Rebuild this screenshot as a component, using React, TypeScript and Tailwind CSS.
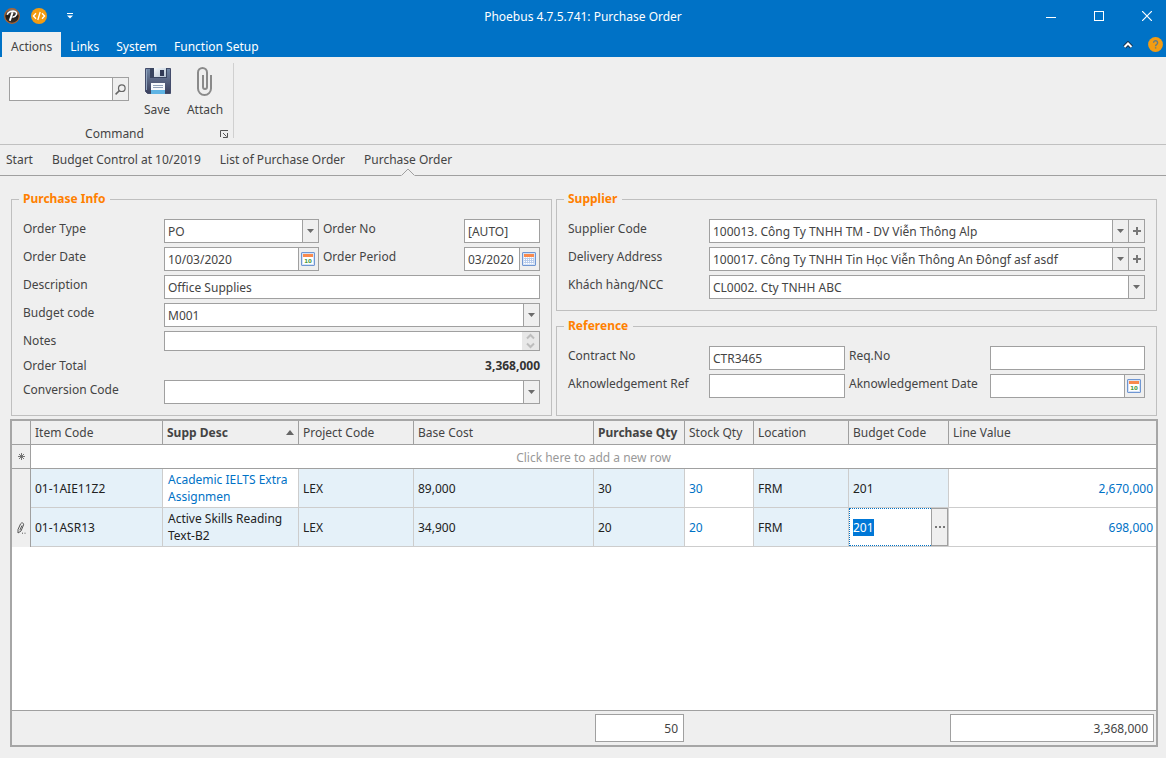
import { useEffect, useRef, ReactNode } from "react";

const menuTabs = ["Links", "System", "Function Setup"];

const openPages = ["Start", "Budget Control at 10/2019", "List of Purchase Order", "Purchase Order"];

const columns = [
  { title: "Item Code", width: "w-[132px]", bold: false },
  { title: "Supp Desc", width: "w-[136px]", bold: true },
  { title: "Project Code", width: "w-[115px]", bold: false },
  { title: "Base Cost", width: "w-[180px]", bold: false },
  { title: "Purchase Qty", width: "w-[91px]", bold: true },
  { title: "Stock Qty", width: "w-[69px]", bold: false },
  { title: "Location", width: "w-[95px]", bold: false },
  { title: "Budget Code", width: "w-[100px]", bold: false },
  { title: "Line Value", width: "", bold: false },
];

const orderLines = [
  {
    item: "01-1AIE11Z2",
    desc: "Academic IELTS Extra Assignmen",
    project: "LEX",
    cost: "89,000",
    qty: "30",
    stock: "30",
    location: "FRM",
    budget: "201",
    value: "2,670,000",
    editing: false,
  },
  {
    item: "01-1ASR13",
    desc: "Active Skills Reading Text-B2",
    project: "LEX",
    cost: "34,900",
    qty: "20",
    stock: "20",
    location: "FRM",
    budget: "201",
    value: "698,000",
    editing: true,
  },
];

/* ---------- Icons ---------- */

function PhoebusLogo() {
  return (
    <svg width="16" height="16" viewBox="0 0 16 16" aria-hidden="true">
      <defs>
        <linearGradient id="logoFill" x1="0" y1="0" x2="0" y2="1">
          <stop offset="0" stopColor="#8a8480" />
          <stop offset="0.5" stopColor="#1d1a18" />
          <stop offset="1" stopColor="#3a3430" />
        </linearGradient>
      </defs>
      <circle cx="8" cy="8" r="7.3" fill="url(#logoFill)" stroke="#b0622c" strokeWidth="1.2" />
      <path d="M3.200 6.800C4 3.600 8.500 2.600 11 3.400c3 1 1.800 5.200-2.600 5.800" fill="none" stroke="#fff" strokeWidth="1.600" />
      <path d="M8.600 4.200 5.800 12.800" stroke="#fff" strokeWidth="2" />
    </svg>
  );
}

function CodeIcon() {
  return (
    <svg width="16" height="16" viewBox="0 0 16 16" fill="none" stroke="#fff" aria-hidden="true">
      <circle cx="8" cy="8" r="8" fill="#f39c12" stroke="none" />
      <path d="M5 5.2 2.4 8 5 10.8M11 5.2 13.6 8 11 10.8M9.2 4 6.8 12" strokeWidth="1.3" />
    </svg>
  );
}

function FloppyIcon() {
  return (
    <svg width="28" height="28" viewBox="0 0 28 28" aria-hidden="true">
      <defs>
        <linearGradient id="floppyBody" x1="0" y1="0" x2="0" y2="1">
          <stop offset="0" stopColor="#7187a5" />
          <stop offset="0.5" stopColor="#56627f" />
          <stop offset="1" stopColor="#383e5c" />
        </linearGradient>
        <linearGradient id="floppyShutter" x1="0" y1="0" x2="1" y2="1">
          <stop offset="0" stopColor="#f4f8fb" />
          <stop offset="1" stopColor="#b5c3d2" />
        </linearGradient>
      </defs>
      <path d="M2.500 1.500h25v25h-23l-2-2z" fill="url(#floppyBody)" stroke="#444c6b" />
      <path d="M3.500 2.500V23" stroke="#93a6bf" />
      <rect x="7" y="1" width="17" height="10" fill="#394560" />
      <rect x="11" y="1" width="12" height="9" fill="url(#floppyShutter)" />
      <rect x="17" y="3" width="4" height="6" fill="#313a55" />
      <rect x="8" y="16" width="14" height="11" fill="#f6f9fc" />
      <rect x="8" y="23" width="14" height="4" fill="#5fb4e4" />
      <path d="M10 18.500h10M10 20.500h10" stroke="#8fa0b8" />
    </svg>
  );
}

function ClipIcon() {
  return (
    <svg width="28" height="32" viewBox="0 0 28 32" fill="none" stroke="#8a8a8a" strokeWidth="2" aria-hidden="true">
      <path d="M20 8v13.500a6.500 6.500 0 0 1-13 0v-16a4.500 4.500 0 0 1 9 0V20a2 2 0 0 1-4 0V8" />
    </svg>
  );
}

function CalendarIcon({ month = false }: { month?: boolean }) {
  return (
    <svg width="14" height="14" viewBox="0 0 14 14" aria-hidden="true">
      <rect x="0.500" y="0.500" width="13" height="13" rx="0.500" fill="#d6e2f5" stroke="#6f96d2" />
      <rect x="2" y="2" width="10" height="10" fill="#fff" />
      <rect x="2" y="2" width="10" height="3" fill="#f98a4d" />
      {month ? (
        <path d="M2 6.500h10M2 8.500h10M2 10.500h10M3.500 5.500v6M5.500 5.500v6M7.500 5.500v6M9.500 5.500v6M11.500 5.500v6" stroke="#b3c8ea" strokeWidth="0.9" />
      ) : (
        <text x="7" y="10.500" textAnchor="middle" fontFamily="DejaVu Sans, sans-serif" fontWeight="bold" fontSize="5.5" fill="#4a9a3c">
          10
        </text>
      )}
    </svg>
  );
}

function DownArrow() {
  return (
    <svg width="7" height="4" viewBox="0 0 7 4" aria-hidden="true">
      <path d="M0 0h7L3.500 4z" fill="#6b6b6b" />
    </svg>
  );
}

/* ---------- Form parts ---------- */

function SideButton({ label, wide = false, children }: { label: string; wide?: boolean; children: ReactNode }) {
  return (
    <button
      type="button"
      aria-label={label}
      className={`flex shrink-0 items-center justify-center border-l border-[#a0a0a0] bg-[#efefef] ${wide ? "w-5 pr-px" : "w-4"}`}
    >
      {children}
    </button>
  );
}

function FieldLabel({ id, second = false, children }: { id: string; second?: boolean; children: ReactNode }) {
  return (
    <label htmlFor={id} className={`whitespace-nowrap leading-5 ${second ? "pl-1" : ""}`}>
      {children}
    </label>
  );
}

function TextField({ id, value = "", children }: { id: string; value?: string; children?: ReactNode }) {
  return (
    <div className="flex h-6 min-w-0 border border-[#a0a0a0] bg-white">
      <input id={id} defaultValue={value} className="w-full min-w-0 flex-1 px-[3px] pt-px outline-none" />
      {children}
    </div>
  );
}

function ComboField({ id, value = "", plus = false }: { id: string; value?: string; plus?: boolean }) {
  return (
    <div className="flex h-6 min-w-0 border border-[#a0a0a0] bg-white">
      <select id={id} defaultValue={value} className="w-full min-w-0 flex-1 appearance-none px-[3px] pt-px outline-none">
        <option value={value}>{value}</option>
      </select>
      <SideButton label="Open list">
        <DownArrow />
      </SideButton>
      {plus && (
        <SideButton label="Add new">
          <svg width="8" height="8" viewBox="0 0 8 8" aria-hidden="true">
            <path d="M4 0v8M0 4h8" stroke="#777" strokeWidth="2" />
          </svg>
        </SideButton>
      )}
    </div>
  );
}

function Group({ title, className = "", children }: { title: string; className?: string; children: ReactNode }) {
  return (
    <fieldset className={`min-w-0 border border-[#bfbfbf] px-[11px] pb-[11px] ${className}`}>
      <legend className="-ml-1 pl-1 pr-[5px] text-[12px] font-bold leading-5 text-[#ff8000]">{title}</legend>
      <div className="mt-[10px]">{children}</div>
    </fieldset>
  );
}

/* ---------- Title bar and ribbon ---------- */

function TitleBar() {
  return (
    <header className="bg-[#0072c6] text-white">
      <div className="grid h-8 grid-cols-[1fr_auto_1fr] items-center">
        <div className="flex items-center pl-1">
          <PhoebusLogo />
          <button type="button" aria-label="Developer tools" className="ml-[11px]">
            <CodeIcon />
          </button>
          <button type="button" aria-label="Customize toolbar" className="ml-5">
            <svg width="6" height="6" viewBox="0 0 6 6" fill="#fff" aria-hidden="true">
              <path d="M0 0h6v1H0zM0 2.500h6L3 5.500z" />
            </svg>
          </button>
        </div>
        <h1>Phoebus 4.7.5.741: Purchase Order</h1>
        <div className="flex justify-end gap-[10px]">
          <button type="button" aria-label="Minimize" className="flex h-8 w-[38px] items-center justify-center">
            <svg width="10" height="10" viewBox="0 0 10 10" aria-hidden="true">
              <path d="M0 6.500h10" stroke="#fff" />
            </svg>
          </button>
          <button type="button" aria-label="Maximize" className="flex h-8 w-[38px] items-center justify-center">
            <svg width="10" height="10" viewBox="0 0 10 10" aria-hidden="true">
              <rect x="0.500" y="0.500" width="9" height="9" fill="none" stroke="#fff" />
            </svg>
          </button>
          <button type="button" aria-label="Close" className="flex h-8 w-[38px] items-center justify-center">
            <svg width="10" height="10" viewBox="0 0 10 10" aria-hidden="true">
              <path d="M0 0 10 10M10 0 0 10" stroke="#fff" strokeWidth="1.200" />
            </svg>
          </button>
        </div>
      </div>

      <nav className="flex h-[25px] items-stretch gap-px pl-[2px] pr-[3px]">
        <button type="button" className="bg-[#efefef] px-[9px] pt-1 text-[#444]">
          Actions
        </button>
        {menuTabs.map((tab) => (
          <button key={tab} type="button" className="px-2 pt-1">
            {tab}
          </button>
        ))}
        <button type="button" aria-label="Collapse ribbon" className="ml-auto">
          <svg width="10" height="8" viewBox="0 0 10 8" fill="none" aria-hidden="true">
            <path d="M1.500 6 5 2.500 8.500 6" stroke="#17324d" strokeWidth="4" />
            <path d="M1.500 6 5 2.500 8.500 6" stroke="#fff" strokeWidth="2" />
          </svg>
        </button>
        <button type="button" aria-label="Help" className="ml-[14px]">
          <svg width="15" height="15" viewBox="0 0 15 15" fill="none" aria-hidden="true">
            <circle cx="7.500" cy="7.500" r="7.400" fill="#f39c12" />
            <path d="M5.600 5.800a2 2 0 1 1 3.200 1.500c-.8.500-1.200.9-1.200 1.900M7.600 10.200v1.300" stroke="#5f7c88" strokeWidth="1.400" />
          </svg>
        </button>
      </nav>
    </header>
  );
}

function Ribbon() {
  return (
    <section className="flex h-[88px] border-b border-[#c0c0c0]">
      <div className="pl-[9px] pr-1 pt-[10px]">
        <div className="flex items-start">
          <div className="mr-1 mt-[10px] flex h-6 w-[120px] border border-[#a0a0a0] bg-white">
            <input aria-label="Search" className="w-full min-w-0 flex-1 px-[3px] outline-none" />
            <SideButton label="Search">
              <svg width="11" height="11" viewBox="0 0 11 11" fill="none" stroke="#666" aria-hidden="true">
                <circle cx="6.800" cy="4.200" r="3.300" strokeWidth="1.200" />
                <path d="M4.400 6.600.6 10.400" strokeWidth="1.500" />
              </svg>
            </SideButton>
          </div>
          <button type="button" className="flex w-12 flex-col items-center leading-4">
            <span className="flex h-[35px] items-start">
              <FloppyIcon />
            </span>
            Save
          </button>
          <button type="button" className="flex w-12 flex-col items-center leading-4">
            <span className="flex h-[35px] items-start">
              <ClipIcon />
            </span>
            Attach
          </button>
        </div>
        <div className="flex items-center pt-2 leading-4">
          <span className="flex-1 text-center">Command</span>
          <button type="button" aria-label="Command options">
            <svg width="9" height="9" viewBox="0 0 9 9" fill="none" stroke="#555" aria-hidden="true">
              <path d="M.5 7V.5H8M3 3l3.500 3.500M7.500 3v4.500H3" />
            </svg>
          </button>
        </div>
      </div>
      <div className="my-[6px] w-px bg-[#d0d0d0]" />
    </section>
  );
}

function PageTabs() {
  return (
    <nav className="flex h-[31px] gap-[19px] border-b border-[#a0a0a0] pl-[6px]">
      {openPages.map((page, index) => (
        <a key={page} href="#" className="relative whitespace-nowrap leading-[30px]">
          {page}
          {index === openPages.length - 1 && (
            <svg width="14" height="8" viewBox="0 0 14 8" className="absolute -bottom-px left-1/2 -translate-x-1/2" aria-hidden="true">
              <path d="M0 7.500 7 .5l7 7V8H0z" fill="#efefef" />
              <path d="M.5 7.500 7 1l6.500 6.500" fill="none" stroke="#a0a0a0" />
            </svg>
          )}
        </a>
      ))}
    </nav>
  );
}

/* ---------- Order form ---------- */

function OrderForm() {
  return (
    <div className="grid grid-cols-[541fr_601fr] gap-1 pl-[11px] pr-[9px]">
      <Group title="Purchase Info">
        <div className="grid grid-cols-[141px_155fr_145px_76fr] gap-y-1">
          <FieldLabel id="orderType">Order Type</FieldLabel>
          <ComboField id="orderType" value="PO" />
          <FieldLabel id="orderNo" second>Order No</FieldLabel>
          <TextField id="orderNo" value="[AUTO]" />

          <FieldLabel id="orderDate">Order Date</FieldLabel>
          <TextField id="orderDate" value="10/03/2020">
            <SideButton label="Pick date" wide>
              <CalendarIcon />
            </SideButton>
          </TextField>
          <FieldLabel id="orderPeriod" second>Order Period</FieldLabel>
          <TextField id="orderPeriod" value="03/2020">
            <SideButton label="Pick period" wide>
              <CalendarIcon month />
            </SideButton>
          </TextField>

          <FieldLabel id="description">Description</FieldLabel>
          <div className="col-span-3">
            <TextField id="description" value="Office Supplies" />
          </div>

          <FieldLabel id="budgetCode">Budget code</FieldLabel>
          <div className="col-span-3">
            <ComboField id="budgetCode" value="M001" />
          </div>

          <FieldLabel id="notes">Notes</FieldLabel>
          <div className="col-span-3 flex h-5 border border-[#a0a0a0] bg-white">
            <textarea id="notes" rows={1} className="min-w-0 flex-1 resize-none overflow-hidden px-[3px] outline-none" />
            <div className="flex w-[17px] items-center justify-center bg-[#e8e8e8]">
              <svg width="9" height="16" viewBox="0 0 9 16" fill="none" stroke="#bdbdbd" strokeWidth="2" aria-hidden="true">
                <path d="M1 5.500 4.500 2 8 5.500M1 10.500 4.500 14 8 10.500" />
              </svg>
            </div>
          </div>

          <label htmlFor="orderTotal" className="leading-[21px]">Order Total</label>
          <output id="orderTotal" className="col-span-3 text-right font-bold leading-[21px] text-[#333]">3,368,000</output>

          <FieldLabel id="conversion">Conversion Code</FieldLabel>
          <div className="col-span-3">
            <ComboField id="conversion" />
          </div>
        </div>
      </Group>

      <div className="flex min-w-0 flex-col gap-[5px]">
        <Group title="Supplier">
          <div className="grid grid-cols-[141px_1fr] gap-y-1">
            <FieldLabel id="supplier">Supplier Code</FieldLabel>
            <ComboField id="supplier" value="100013. Công Ty TNHH TM - DV Viễn Thông Alp" plus />
            <FieldLabel id="delivery">Delivery Address</FieldLabel>
            <ComboField id="delivery" value="100017. Công Ty TNHH Tin Học Viễn Thông An Đôngf asf asdf" plus />
            <FieldLabel id="customer">Khách hàng/NCC</FieldLabel>
            <ComboField id="customer" value="CL0002. Cty TNHH ABC" />
          </div>
        </Group>

        <Group title="Reference" className="flex-1">
          <div className="grid grid-cols-[141px_136fr_145px_155fr] gap-y-1">
            <FieldLabel id="contract">Contract No</FieldLabel>
            <TextField id="contract" value="CTR3465" />
            <FieldLabel id="reqNo" second>Req.No</FieldLabel>
            <TextField id="reqNo" />

            <FieldLabel id="ackRef">Aknowledgement Ref</FieldLabel>
            <TextField id="ackRef" />
            <FieldLabel id="ackDate" second>Aknowledgement Date</FieldLabel>
            <TextField id="ackDate">
              <SideButton label="Pick date" wide>
                <CalendarIcon />
              </SideButton>
            </TextField>
          </div>
        </Group>
      </div>
    </div>
  );
}

/* ---------- Order lines ---------- */

function BudgetEditor({ value }: { value: string }) {
  const inputRef = useRef<HTMLInputElement>(null);

  useEffect(() => {
    inputRef.current?.focus();
    inputRef.current?.select();
  }, []);

  return (
    <div className="flex h-[38px]">
      <input
        ref={inputRef}
        aria-label="Budget Code"
        defaultValue={value}
        className="w-full min-w-0 flex-1 border border-r-0 border-dotted border-[#0072c6] bg-white px-[3px] outline-none selection:bg-[#0078d7] selection:text-white"
      />
      <button type="button" aria-label="Choose budget code" className="flex w-[17px] items-center justify-center border border-[#a0a0a0] bg-[#efefef]">
        <svg width="10" height="2" viewBox="0 0 10 2" fill="#777" aria-hidden="true">
          <path d="M0 0h2v2H0zM4 0h2v2H4zM8 0h2v2H8z" />
        </svg>
      </button>
    </div>
  );
}

function OrderGrid() {
  const cell = "border-b border-r border-[#cdcdcd] px-1 text-[#222]";

  return (
    <section className="ml-[10px] mr-2 mb-[11px] mt-[3px] flex flex-1 flex-col border-2 border-[#a6a6a6] bg-white">
      <table className="w-full table-fixed border-separate border-spacing-0 text-left">
        <thead>
          <tr className="h-6 bg-[#efefef]">
            <th className="w-[19px] border-b border-r border-[#a0a0a0]" aria-label="Row state" />
            {columns.map((column, index) => (
              <th
                key={column.title}
                className={`whitespace-nowrap border-b border-[#a0a0a0] pl-1 ${column.width} ${column.bold ? "font-bold" : "font-normal"} ${index < columns.length - 1 ? "border-r" : ""}`}
              >
                <span className="flex items-center justify-between">
                  {column.title}
                  {column.title === "Supp Desc" && (
                    <svg width="8" height="5" viewBox="0 0 8 5" className="mr-1" aria-hidden="true">
                      <path d="M4 0l4 5H0z" fill="#666" />
                    </svg>
                  )}
                </span>
              </th>
            ))}
          </tr>
        </thead>
        <tbody>
          <tr className="h-6">
            <td className="border-b border-r border-[#a0a0a0] bg-[#efefef]">
              <svg width="7" height="7" viewBox="0 0 7 7" className="mx-auto" stroke="#666" aria-hidden="true">
                <path d="M3.500 0v7M0 3.500h7M1 1l5 5M6 1 1 6" strokeWidth="0.900" />
              </svg>
            </td>
            <td colSpan={9} className="border-b border-[#a0a0a0] pt-px text-center text-[#999]">
              Click here to add a new row
            </td>
          </tr>
          {orderLines.map((line) => (
            <tr key={line.item} className="h-[39px] bg-[#e5f1f9]">
              <td className="border-r border-[#a0a0a0] bg-[#efefef]">
                {line.editing && (
                  <svg width="9" height="12" viewBox="0 0 9 12" className="mx-auto" fill="none" stroke="#555" aria-hidden="true">
                    <path d="M1 11V7.500L3.600 1.800C4.400.2 7 .8 6.600 2.800L4 9zM5 3.500 2.800 8.200" />
                    <path d="M5 11.200h1M7.500 11.200h1" />
                  </svg>
                )}
              </td>
              <td className={cell}>{line.item}</td>
              <td className={line.editing ? "border-b border-r border-[#cdcdcd] px-[5px] text-[#222]" : "border-b border-r border-[#cdcdcd] bg-white px-[5px] text-[#0072c6]"}>
                {line.desc}
              </td>
              <td className={cell}>{line.project}</td>
              <td className={cell}>{line.cost}</td>
              <td className={cell}>{line.qty}</td>
              <td className="border-b border-r border-[#cdcdcd] bg-white px-1 text-[#0072c6]">{line.stock}</td>
              <td className={cell}>{line.location}</td>
              {line.editing ? (
                <td className="border-b border-r border-[#cdcdcd] p-0">
                  <BudgetEditor value={line.budget} />
                </td>
              ) : (
                <td className={cell}>{line.budget}</td>
              )}
              <td className="border-b border-[#cdcdcd] bg-white pr-[3px] text-right text-[#0072c6]">{line.value}</td>
            </tr>
          ))}
        </tbody>
      </table>

      <div className="mt-auto grid h-[35px] grid-cols-[582px_91px_264px_1fr] items-center border-t border-[#a0a0a0] bg-[#efefef] text-right">
        <output className="col-start-2 mx-px h-7 border border-[#a0a0a0] bg-white pr-[5px] leading-[27px]">50</output>
        <output className="col-start-4 ml-px mr-[2px] h-7 border border-[#a0a0a0] bg-white pr-[5px] leading-[27px]">3,368,000</output>
      </div>
    </section>
  );
}

export default function App() {
  return (
    <div className="flex min-h-screen flex-col bg-[#efefef] font-['Noto_Sans',sans-serif] text-[12px] leading-[17px] text-[#444]">
      <TitleBar />
      <Ribbon />
      <PageTabs />
      <main className="flex flex-1 flex-col pt-[13px]">
        <OrderForm />
        <OrderGrid />
      </main>
    </div>
  );
}
